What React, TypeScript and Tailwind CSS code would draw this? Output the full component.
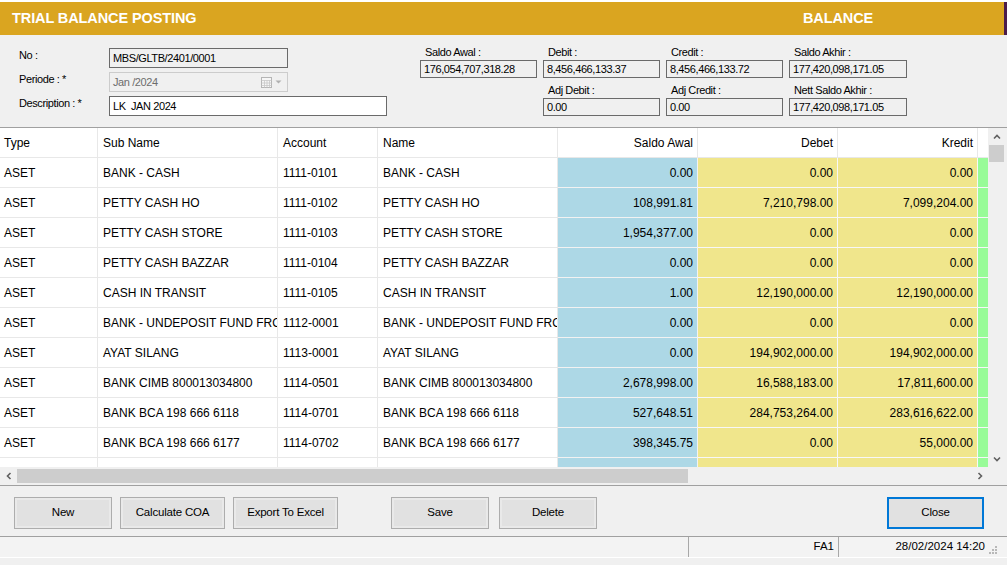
import React from "react";

type Row = {
  type: string;
  sub: string;
  account: string;
  name: string;
  awal: string;
  debet: string;
  kredit: string;
};

const rows: Row[] = [
  { type: "ASET", sub: "BANK - CASH", account: "1111-0101", name: "BANK - CASH", awal: "0.00", debet: "0.00", kredit: "0.00" },
  { type: "ASET", sub: "PETTY CASH HO", account: "1111-0102", name: "PETTY CASH HO", awal: "108,991.81", debet: "7,210,798.00", kredit: "7,099,204.00" },
  { type: "ASET", sub: "PETTY CASH STORE", account: "1111-0103", name: "PETTY CASH STORE", awal: "1,954,377.00", debet: "0.00", kredit: "0.00" },
  { type: "ASET", sub: "PETTY CASH BAZZAR", account: "1111-0104", name: "PETTY CASH BAZZAR", awal: "0.00", debet: "0.00", kredit: "0.00" },
  { type: "ASET", sub: "CASH IN TRANSIT", account: "1111-0105", name: "CASH IN TRANSIT", awal: "1.00", debet: "12,190,000.00", kredit: "12,190,000.00" },
  { type: "ASET", sub: "BANK - UNDEPOSIT FUND FROM STORE", account: "1112-0001", name: "BANK - UNDEPOSIT FUND FROM STORE", awal: "0.00", debet: "0.00", kredit: "0.00" },
  { type: "ASET", sub: "AYAT SILANG", account: "1113-0001", name: "AYAT SILANG", awal: "0.00", debet: "194,902,000.00", kredit: "194,902,000.00" },
  { type: "ASET", sub: "BANK CIMB 800013034800", account: "1114-0501", name: "BANK CIMB 800013034800", awal: "2,678,998.00", debet: "16,588,183.00", kredit: "17,811,600.00" },
  { type: "ASET", sub: "BANK BCA 198 666 6118", account: "1114-0701", name: "BANK BCA 198 666 6118", awal: "527,648.51", debet: "284,753,264.00", kredit: "283,616,622.00" },
  { type: "ASET", sub: "BANK BCA 198 666 6177", account: "1114-0702", name: "BANK BCA 198 666 6177", awal: "398,345.75", debet: "0.00", kredit: "55,000.00" },
  { type: "", sub: "", account: "", name: "", awal: "", debet: "", kredit: "" },
];

const cell = "h-[30px] shrink-0 flex items-center overflow-hidden whitespace-nowrap border-r border-b border-[#e8e8e8]";

function Chevron({ dir }: { dir: "up" | "down" | "left" | "right" }) {
  const d = {
    up: "M1 5.5 L4 2.5 L7 5.5",
    down: "M1 2.5 L4 5.5 L7 2.5",
    left: "M5.5 1 L2.5 4 L5.5 7",
    right: "M2.5 1 L5.5 4 L2.5 7",
  }[dir];
  return (
    <svg width="8" height="8" viewBox="0 0 8 8">
      <path d={d} fill="none" stroke="#606060" strokeWidth="1.6" />
    </svg>
  );
}

function SummaryBox({ label, value }: { label: string; value: string }) {
  return (
    <div className="flex flex-col">
      <div className="h-[15px] pl-[5px] leading-[14px]">{label}</div>
      <div className="h-[18px] border border-[#6a6a6a] bg-[#f0f0f0] pl-[3px] leading-[16px]">{value}</div>
    </div>
  );
}

function Btn({ label, w, focused }: { label: string; w: string; focused?: boolean }) {
  return (
    <button
      className={
        focused
          ? `${w} h-[32px] shrink-0 border-2 border-[#0078d7] bg-[#e1e1e1] text-[11.5px] tracking-[-0.2px] text-black`
          : `${w} h-[32px] shrink-0 border border-[#adadad] bg-[#e1e1e1] shadow-[inset_0_0_0_2px_#e9e9e9] text-[11.5px] tracking-[-0.2px] text-black`
      }
    >
      {label}
    </button>
  );
}

export default function App() {
  return (
    <div className="w-[1007px] h-[565px] bg-[#f0f0f0] flex flex-col overflow-hidden font-['Liberation_Sans',Arial,sans-serif] text-black">
      <div className="h-[2px] bg-white shrink-0" />
      {/* title bar */}
      <div className="h-[33px] shrink-0 bg-[#daa520] flex items-center text-white font-bold text-[14.5px] tracking-[-0.1px] border-r-[3px] border-[#4b1c4b]">
        <div className="w-[803px] pl-[12px]">TRIAL BALANCE POSTING</div>
        <div>BALANCE</div>
      </div>

      {/* form */}
      <div className="h-[92px] shrink-0 flex text-[11px] tracking-[-0.4px]">
        <div className="pl-[19px] pt-[13px] flex flex-col gap-[4px] w-[387px] shrink-0">
          <div className="flex items-center h-[20px]">
            <div className="w-[90px] -mt-[6px]">No :</div>
            <div className="w-[179px] h-[20px] border border-[#6a6a6a] bg-[#f0f0f0] pl-[3px] leading-[18px]">MBS/GLTB/2401/0001</div>
          </div>
          <div className="flex items-center h-[20px]">
            <div className="w-[90px] -mt-[6px]">Periode : *</div>
            <div className="w-[179px] h-[20px] border border-[#cccccc] bg-[#f0f0f0] pl-[3px] flex items-center text-[#6d6d6d]">
              <span className="flex-1">Jan /2024</span>
              <svg width="11" height="11" viewBox="0 0 11 11" className="mr-[2px]">
                <rect x="0.5" y="0.5" width="10" height="10" fill="#f6f6f6" stroke="#b5b5b5" />
                <path d="M0.5 3.5 H10.5 M0.5 6 H10.5 M0.5 8.5 H10.5 M3.5 3.5 V10.5 M6 3.5 V10.5 M8.5 3.5 V10.5" stroke="#c8c8c8" strokeWidth="0.8" />
              </svg>
              <svg width="9" height="6" viewBox="0 0 9 6" className="mr-[4px]">
                <path d="M1.5 1.5 L4.5 4.5 L7.5 1.5 Z" fill="#b0b0b0" />
              </svg>
            </div>
          </div>
          <div className="flex items-center h-[20px]">
            <div className="w-[90px] -mt-[6px]">Description : *</div>
            <div className="w-[278px] h-[20px] border border-[#6a6a6a] bg-white pl-[3px] leading-[18px]">LK&nbsp; JAN 2024</div>
          </div>
        </div>
        <div className="ml-[33px] pt-[10px] grid grid-cols-[117px_117px_117px_118px] gap-x-[6px] gap-y-[5px] content-start">
          <SummaryBox label="Saldo Awal :" value="176,054,707,318.28" />
          <SummaryBox label="Debit :" value="8,456,466,133.37" />
          <SummaryBox label="Credit :" value="8,456,466,133.72" />
          <SummaryBox label="Saldo Akhir :" value="177,420,098,171.05" />
          <div />
          <SummaryBox label="Adj Debit :" value="0.00" />
          <SummaryBox label="Adj Credit :" value="0.00" />
          <SummaryBox label="Nett Saldo Akhir :" value="177,420,098,171.05" />
        </div>
      </div>

      {/* grid */}
      <div className="shrink-0 border-t border-[#a0a0a0] flex flex-col text-[12px]">
        <div className="flex h-[339px]">
          <div className="w-[988px] shrink-0 overflow-hidden bg-white">
            <div className="flex">
              <div className={`${cell} w-[98px] pl-[4px]`}>Type</div>
              <div className={`${cell} w-[180px] pl-[5px]`}>Sub Name</div>
              <div className={`${cell} w-[100px] pl-[5px]`}>Account</div>
              <div className={`${cell} w-[180px] pl-[5px]`}>Name</div>
              <div className={`${cell} w-[140px] justify-end pr-[4px]`}>Saldo Awal</div>
              <div className={`${cell} w-[140px] justify-end pr-[4px]`}>Debet</div>
              <div className={`${cell} w-[140px] justify-end pr-[4px]`}>Kredit</div>
              <div className={`${cell} w-[10px] border-r-0`} />
            </div>
            {rows.map((r, i) => (
              <div key={i} className="flex">
                <div className={`${cell} w-[98px] pl-[4px]`}>{r.type}</div>
                <div className={`${cell} w-[180px] pl-[5px]`}>{r.sub}</div>
                <div className={`${cell} w-[100px] pl-[5px]`}>{r.account}</div>
                <div className={`${cell} w-[180px] pl-[5px]`}>{r.name}</div>
                <div className={`${cell} w-[140px] justify-end pr-[4px] bg-[#add8e6] border-[#f2f2f2]`}>{r.awal}</div>
                <div className={`${cell} w-[140px] justify-end pr-[4px] bg-[#f0e68c] border-[#f7f7f7]`}>{r.debet}</div>
                <div className={`${cell} w-[140px] justify-end pr-[4px] bg-[#f0e68c] border-[#f7f7f7]`}>{r.kredit}</div>
                <div className={`${cell} w-[10px] bg-[#98fb98] border-r-0 border-[#f7f7f7]`} />
              </div>
            ))}
          </div>
          <div className="w-[17px] shrink-0 bg-[#f0f0f0] flex flex-col items-center">
            <div className="h-[17px] flex items-center justify-center">
              <Chevron dir="up" />
            </div>
            <div className="w-[15px] h-[17px] bg-[#cdcdcd]" />
            <div className="flex-1" />
            <div className="h-[17px] flex items-center justify-center">
              <Chevron dir="down" />
            </div>
          </div>
        </div>
        <div className="flex h-[18px]">
          <div className="w-[988px] shrink-0 flex items-center bg-[#f0f0f0]">
            <div className="w-[17px] h-[18px] flex items-center justify-center">
              <Chevron dir="left" />
            </div>
            <div className="w-[671px] h-[14px] bg-[#cdcdcd]" />
            <div className="flex-1" />
            <div className="w-[17px] h-[18px] flex items-center justify-center">
              <Chevron dir="right" />
            </div>
          </div>
          <div className="w-[17px] bg-[#f0f0f0]" />
        </div>
      </div>

      {/* buttons */}
      <div className="h-[51px] shrink-0 border-t border-[#a0a0a0] flex items-start pt-[11px] pl-[14px] pr-[23px]">
        <Btn label="New" w="w-[98px]" />
        <div className="w-[8px]" />
        <Btn label="Calculate COA" w="w-[105px]" />
        <div className="w-[8px]" />
        <Btn label="Export To Excel" w="w-[105px]" />
        <div className="w-[53px]" />
        <Btn label="Save" w="w-[98px]" />
        <div className="w-[10px]" />
        <Btn label="Delete" w="w-[98px]" />
        <div className="flex-1" />
        <Btn label="Close" w="w-[97px]" focused />
      </div>

      {/* status bar */}
      <div className="h-[22px] shrink-0 border-t border-[#a0a0a0] border-b border-b-white bg-[#f3f3f3] flex text-[11.5px]">
        <div className="w-[689px] border-r border-[#a8a8a8]" />
        <div className="w-[150px] border-r border-[#a8a8a8] flex items-center justify-end pr-[4px]">FA1</div>
        <div className="w-[147px] flex items-center justify-end pr-[1px]">28/02/2024 14:20</div>
        <div className="w-[14px] flex items-end justify-center pb-[2px]">
          <svg width="10" height="10" viewBox="0 0 10 10">
            <rect x="7" y="1" width="2" height="2" fill="#b8b8b8" />
            <rect x="4" y="4" width="2" height="2" fill="#b8b8b8" />
            <rect x="7" y="4" width="2" height="2" fill="#b8b8b8" />
            <rect x="1" y="7" width="2" height="2" fill="#b8b8b8" />
            <rect x="4" y="7" width="2" height="2" fill="#b8b8b8" />
            <rect x="7" y="7" width="2" height="2" fill="#b8b8b8" />
          </svg>
        </div>
      </div>
      <div className="flex-1 bg-[#f0f0f0]" />
    </div>
  );
}
